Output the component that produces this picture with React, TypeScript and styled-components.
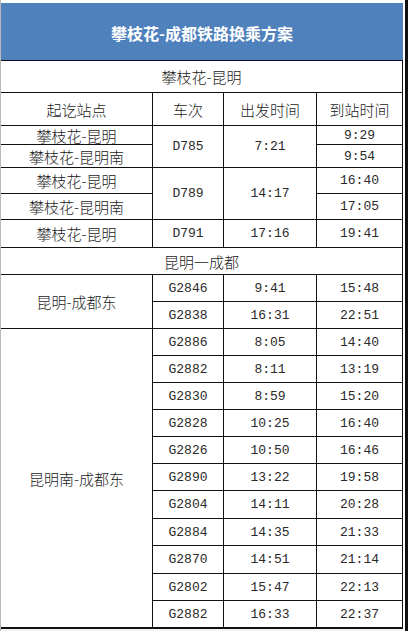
import React from "react"
import styled, { createGlobalStyle } from "styled-components"

const GlobalStyle = createGlobalStyle`
  html, body {
    margin: 0;
    padding: 0;
    background: #ffffff;
  }
  * {
    box-sizing: border-box;
  }
`

const Frame = styled.div`
  display: flex;
  flex-direction: column;
  width: 408px;
  height: 631px;
  padding-top: 3px;
  padding-right: 2px;
  border-left: 1px solid #b8b8b8;
  border-right: 3px solid #111;
  background: #fff;
  overflow: hidden;
`

const TitleBar = styled.div`
  display: flex;
  align-items: center;
  justify-content: center;
  height: 57px;
  padding-top: 3px;
  background: #4f81bd;
  color: #fff;
  font-family: "Noto Sans CJK SC", "Liberation Sans", sans-serif;
  font-size: 16px;
  font-weight: 700;
`

const Table = styled.div`
  display: grid;
  grid-template-columns: 151px 70px 92px 85px;
  grid-template-rows:
    31px 32px 18px 22px 25px 25px 27px 26px 26px 26px
    26px 26px 26px 26px 26px 26px 27px 26px 27px 26px 26px;
  gap: 1px;
  background: #111;
  border-top: 1px solid #0b1020;
  border-right: 1px solid #111;
  border-bottom: 2px solid #111;
`

const Cell = styled.div<{ $row: string; $col: string; $mono?: boolean }>`
  grid-row: ${p => p.$row};
  grid-column: ${p => p.$col};
  display: flex;
  align-items: center;
  justify-content: center;
  background: #fff;
  color: ${p => (p.$mono ? "#2a2a2a" : "#1a1a1a")};
  font-family: ${p =>
    p.$mono
      ? `"Liberation Mono", "DejaVu Sans Mono", monospace`
      : `"Noto Sans CJK SC", "Liberation Sans", sans-serif`};
  font-size: ${p => (p.$mono ? "13px" : "15px")};
  font-weight: ${p => (p.$mono ? 400 : 300)};
  line-height: 1;
  white-space: nowrap;
`

const Rest = styled.div`
  flex: 1;
  background: #f4f4f4;
`

type Train = { no: string; dep: string; arr: string }

const kunmingTrains: Train[] = [
  { no: "G2846", dep: "9:41", arr: "15:48" },
  { no: "G2838", dep: "16:31", arr: "22:51" },
]

const kunmingSouthTrains: Train[] = [
  { no: "G2886", dep: "8:05", arr: "14:40" },
  { no: "G2882", dep: "8:11", arr: "13:19" },
  { no: "G2830", dep: "8:59", arr: "15:20" },
  { no: "G2828", dep: "10:25", arr: "16:40" },
  { no: "G2826", dep: "10:50", arr: "16:46" },
  { no: "G2890", dep: "13:22", arr: "19:58" },
  { no: "G2804", dep: "14:11", arr: "20:28" },
  { no: "G2884", dep: "14:35", arr: "21:33" },
  { no: "G2870", dep: "14:51", arr: "21:14" },
  { no: "G2802", dep: "15:47", arr: "22:13" },
  { no: "G2882", dep: "16:33", arr: "22:37" },
]

const TrainRows = ({ list, start }: { list: Train[]; start: number }) => (
  <>
    {list.map((t, i) => {
      const r = String(start + i)
      return (
        <React.Fragment key={t.no + i}>
          <Cell $row={r} $col="2" $mono>{t.no}</Cell>
          <Cell $row={r} $col="3" $mono>{t.dep}</Cell>
          <Cell $row={r} $col="4" $mono>{t.arr}</Cell>
        </React.Fragment>
      )
    })}
  </>
)

export default function App() {
  return (
    <>
      <GlobalStyle />
      <Frame>
        <TitleBar>攀枝花-成都铁路换乘方案</TitleBar>
        <Table>
          <Cell $row="1" $col="1 / 5">攀枝花-昆明</Cell>

          <Cell $row="2" $col="1">起讫站点</Cell>
          <Cell $row="2" $col="2">车次</Cell>
          <Cell $row="2" $col="3">出发时间</Cell>
          <Cell $row="2" $col="4">到站时间</Cell>

          <Cell $row="3" $col="1">攀枝花-昆明</Cell>
          <Cell $row="3 / 5" $col="2" $mono>D785</Cell>
          <Cell $row="3 / 5" $col="3" $mono>7:21</Cell>
          <Cell $row="3" $col="4" $mono>9:29</Cell>
          <Cell $row="4" $col="1">攀枝花-昆明南</Cell>
          <Cell $row="4" $col="4" $mono>9:54</Cell>

          <Cell $row="5" $col="1">攀枝花-昆明</Cell>
          <Cell $row="5 / 7" $col="2" $mono>D789</Cell>
          <Cell $row="5 / 7" $col="3" $mono>14:17</Cell>
          <Cell $row="5" $col="4" $mono>16:40</Cell>
          <Cell $row="6" $col="1">攀枝花-昆明南</Cell>
          <Cell $row="6" $col="4" $mono>17:05</Cell>

          <Cell $row="7" $col="1">攀枝花-昆明</Cell>
          <Cell $row="7" $col="2" $mono>D791</Cell>
          <Cell $row="7" $col="3" $mono>17:16</Cell>
          <Cell $row="7" $col="4" $mono>19:41</Cell>

          <Cell $row="8" $col="1 / 5">昆明一成都</Cell>

          <Cell $row="9 / 11" $col="1">昆明-成都东</Cell>
          <TrainRows list={kunmingTrains} start={9} />

          <Cell $row="11 / 22" $col="1">昆明南-成都东</Cell>
          <TrainRows list={kunmingSouthTrains} start={11} />
        </Table>
        <Rest />
      </Frame>
    </>
  )
}
